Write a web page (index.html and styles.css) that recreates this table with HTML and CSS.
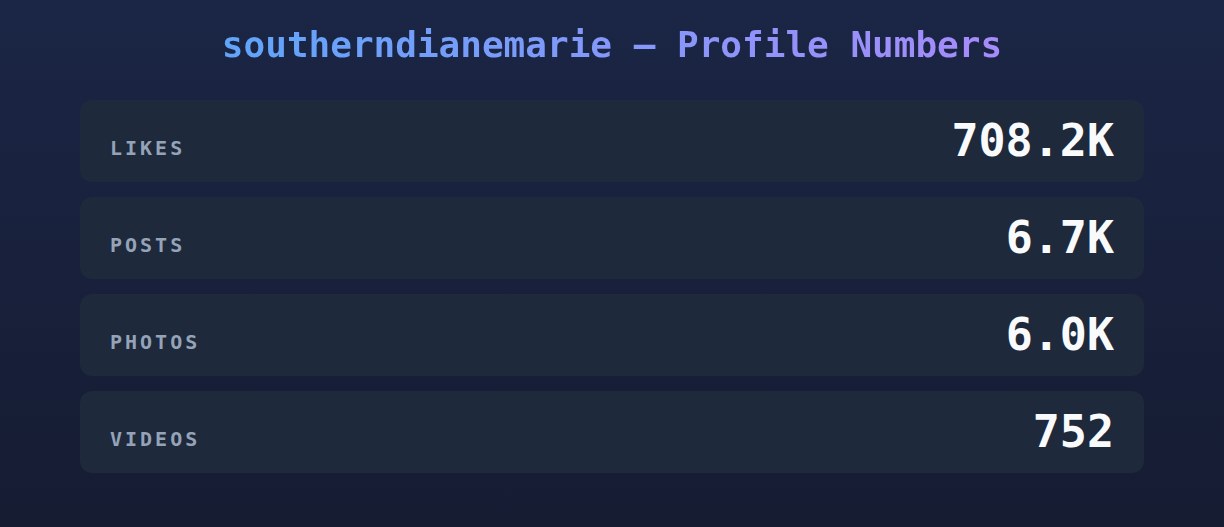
FILE: index.html
```html
<!DOCTYPE html>
<html lang="en">
<head>
    <meta charset="UTF-8">
    <meta name="viewport" content="width=device-width, initial-scale=1.0">
    <title>Profile Numbers</title>
    <link rel="stylesheet" href="styles.css">
</head>
<body>

    <div class="page">
        <!-- Title -->
        <h1 class="title"><span>southerndianemarie — Profile Numbers</span></h1>

        <!-- Stats -->
        <div class="stats">
            <div class="stat">
                <span class="label">Likes</span>
                <span class="value">708.2K</span>
            </div>
            <div class="stat">
                <span class="label">Posts</span>
                <span class="value">6.7K</span>
            </div>
            <div class="stat">
                <span class="label">Photos</span>
                <span class="value">6.0K</span>
            </div>
            <div class="stat">
                <span class="label">Videos</span>
                <span class="value">752</span>
            </div>
        </div>
    </div>

</body>
</html>
```

FILE: styles.css
```css
/* General Styles */
html, body {
    height: 100%;
}

body {
    margin: 0;
    padding: 0;
    font-family: "DejaVu Sans Mono", "Liberation Mono", monospace;
    background: linear-gradient(180deg, #1b2545 0%, #151c32 100%);
    color: #f8fafc;
}

.page {
    padding: 24px 80px;
}

/* Title */
.title {
    margin: 0 0 34px;
    text-align: center;
    font-size: 36px;
    font-weight: bold;
    line-height: 42px;
}

.title span {
    display: inline-block;
    background: linear-gradient(90deg, #60a5fa, #a78bfa);
    -webkit-background-clip: text;
    background-clip: text;
    color: transparent;
}

/* Stat cards */
.stats {
    display: flex;
    flex-direction: column;
    gap: 15px;
}

.stat {
    display: flex;
    justify-content: space-between;
    align-items: center;
    padding: 15px 30px;
    background-color: #1e293b;
    border-radius: 12px;
}

.label {
    margin-top: 14px;
    font-size: 20px;
    font-weight: bold;
    text-transform: uppercase;
    letter-spacing: 3px;
    color: #94a3b8;
}

.value {
    font-size: 45px;
    line-height: 52px;
    font-weight: bold;
    color: #f8fafc;
}
```
